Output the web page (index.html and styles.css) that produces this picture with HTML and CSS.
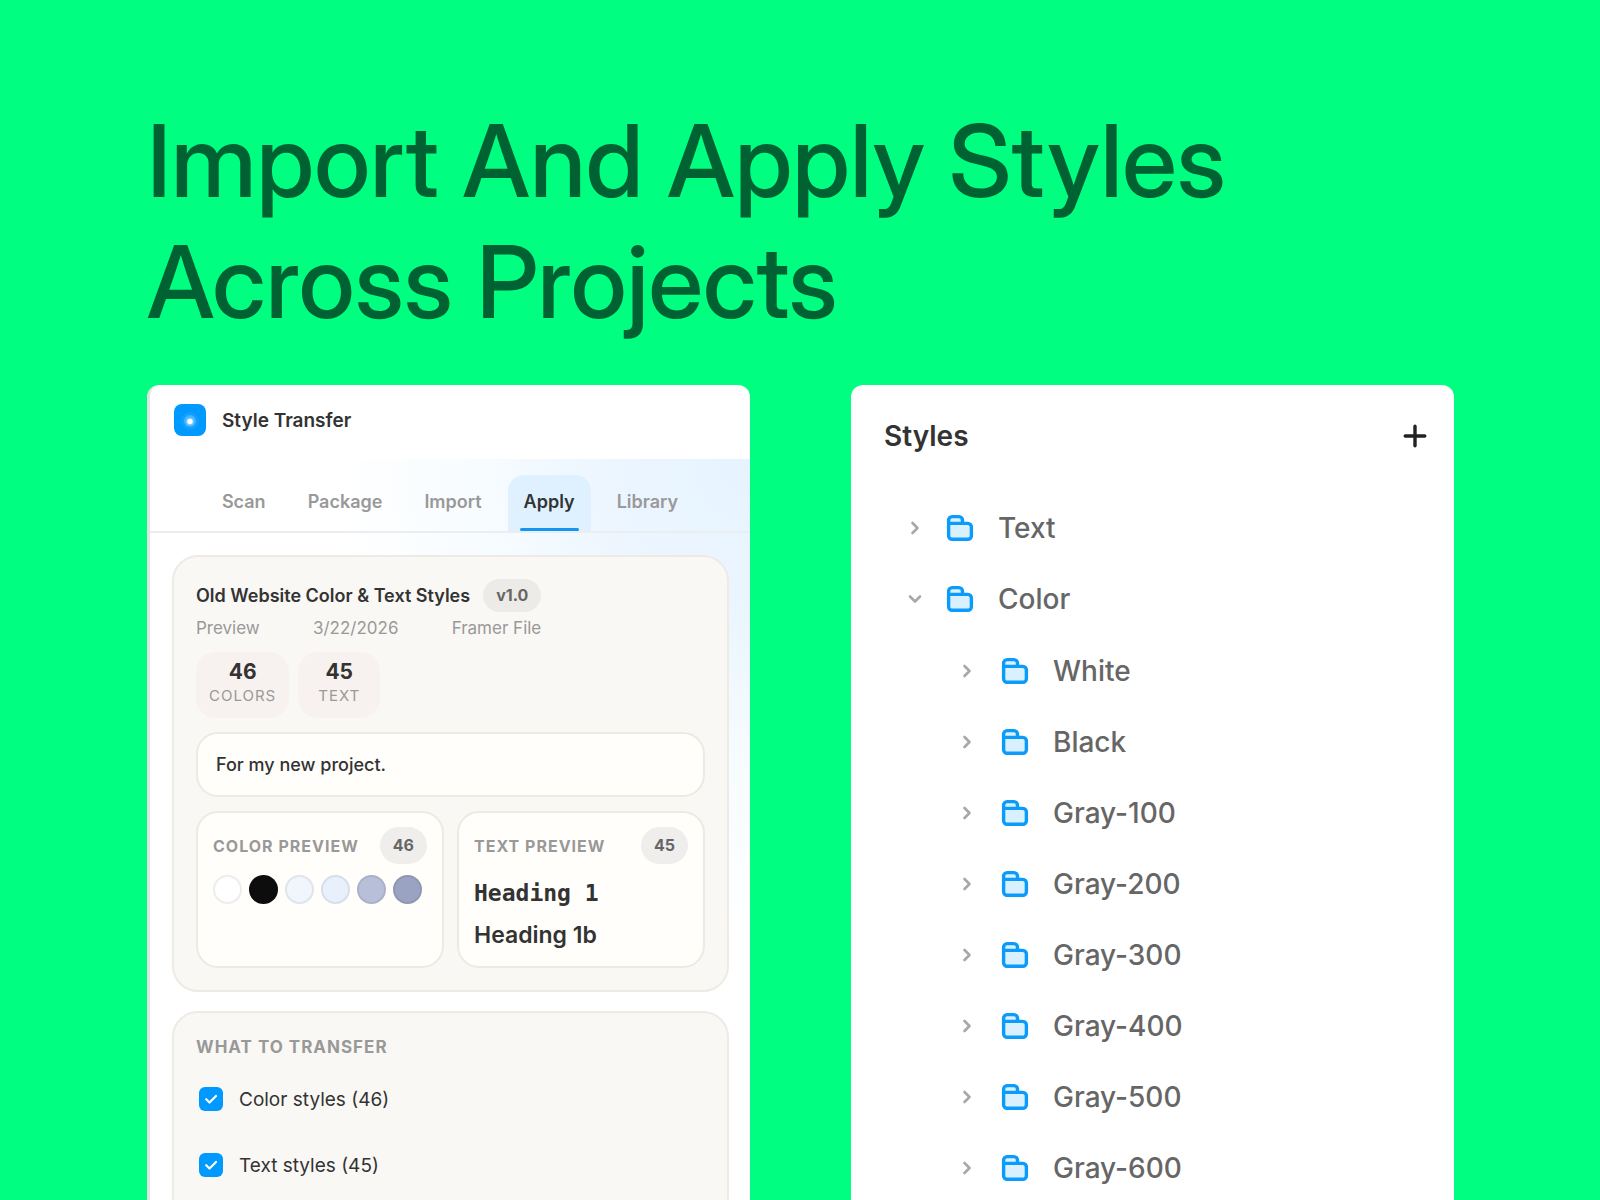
FILE: index.html
```html
<!DOCTYPE html>
<html lang="en">
<head>
<meta charset="utf-8">
<title>Style Transfer</title>
<link rel="stylesheet" href="styles.css">
</head>
<body>
<svg class="sprite" aria-hidden="true">
  <symbol id="folder" viewBox="0 0 28 28">
    <path d="M2.600 9.200V6.200A4 4 0 0 1 6.600 2.600H12.500A4 4 0 0 1 16.500 6.600V9.200H21.900A3.500 3.500 0 0 1 25.400 12.700V21.500A3.500 3.500 0 0 1 21.900 25.200H6.100A3.500 3.500 0 0 1 2.600 21.700Z" fill="#d9f0ff"/>
    <path d="M2.600 9.400V6.100A3.500 3.500 0 0 1 6.100 2.600H13A3.500 3.500 0 0 1 16.500 6.100V9M2.600 9.400H21.900A3.500 3.500 0 0 1 25.400 12.900V21.700A3.500 3.500 0 0 1 21.900 25.200H6.100A3.500 3.500 0 0 1 2.600 21.700Z" fill="none" stroke="#0a9bfb" stroke-width="3.400" stroke-linecap="round" stroke-linejoin="round"/>
  </symbol>
  <symbol id="chevron" viewBox="0 0 16 16">
    <path d="M5.500 3L10.500 8L5.500 13" fill="none" stroke="#a8a8a8" stroke-width="2.600" stroke-linecap="round" stroke-linejoin="round"/>
  </symbol>
</svg>
<main class="stage">
  <h1 class="headline">Import And Apply Styles<br>Across Projects</h1>
  <div class="panels">
    <section class="panel plugin">
      <header class="plugin-bar">
        <svg class="logo" viewBox="0 0 32 32" aria-hidden="true">
          <rect width="32" height="32" rx="8" fill="#0099ff"/>
          <circle cx="16" cy="17" r="9" fill="#fff" opacity=".06"/>
          <circle cx="16" cy="17" r="6" fill="#fff" opacity=".22"/>
          <circle cx="16" cy="17.500" r="4" fill="#fff" opacity=".25"/>
          <circle cx="16" cy="17.500" r="2.700" fill="#fff"/>
        </svg>
        <span class="plugin-name">Style Transfer</span>
      </header>
      <div class="plugin-body">
        <nav class="tabs">
          <button class="tab" type="button">Scan</button>
          <button class="tab" type="button">Package</button>
          <button class="tab" type="button">Import</button>
          <button class="tab active" type="button">Apply</button>
          <button class="tab" type="button">Library</button>
        </nav>
        <div class="cards">
          <article class="card">
            <div class="summary">
              <div class="summary-title"><h2>Old Website Color &amp; Text Styles</h2><span class="version">v1.0</span></div>
              <div class="meta"><span>Preview</span><span>3/22/2026</span><span>Framer File</span></div>
            </div>
            <div class="stats">
              <div class="stat"><strong>46</strong><span>COLORS</span></div>
              <div class="stat"><strong>45</strong><span>TEXT</span></div>
            </div>
            <input class="note" type="text" aria-label="Note" value="For my new project.">
            <div class="previews">
              <section class="preview">
                <div class="preview-head"><h3 class="label">COLOR PREVIEW</h3><span class="count">46</span></div>
                <div class="swatches">
                  <span class="swatch white"></span>
                  <span class="swatch black"></span>
                  <span class="swatch gray-100"></span>
                  <span class="swatch gray-200"></span>
                  <span class="swatch gray-300"></span>
                  <span class="swatch gray-400"></span>
                </div>
              </section>
              <section class="preview">
                <div class="preview-head"><h3 class="label">TEXT PREVIEW</h3><span class="count">45</span></div>
                <p class="sample mono">Heading 1</p>
                <p class="sample sans">Heading 1b</p>
              </section>
            </div>
          </article>
          <article class="card transfer">
            <h3 class="label">WHAT TO TRANSFER</h3>
            <label class="option"><input type="checkbox" checked><span>Color styles (46)</span></label>
            <label class="option"><input type="checkbox" checked><span>Text styles (45)</span></label>
          </article>
        </div>
      </div>
    </section>

    <section class="panel styles">
      <header class="styles-head">
        <h2>Styles</h2>
        <button class="add" type="button" aria-label="Add style">
          <svg viewBox="0 0 24 24"><path d="M12 2.200V21.800M2.200 12H21.800" fill="none" stroke="#222" stroke-width="3.400" stroke-linecap="round"/></svg>
        </button>
      </header>
      <ul class="tree">
        <li><div class="row"><svg class="chevron"><use href="#chevron"/></svg><svg class="folder"><use href="#folder"/></svg><span>Text</span></div></li>
        <li><div class="row"><svg class="chevron open"><use href="#chevron"/></svg><svg class="folder"><use href="#folder"/></svg><span>Color</span></div>
          <ul class="branch">
            <li class="row"><svg class="chevron"><use href="#chevron"/></svg><svg class="folder"><use href="#folder"/></svg><span>White</span></li>
            <li class="row"><svg class="chevron"><use href="#chevron"/></svg><svg class="folder"><use href="#folder"/></svg><span>Black</span></li>
            <li class="row"><svg class="chevron"><use href="#chevron"/></svg><svg class="folder"><use href="#folder"/></svg><span>Gray-100</span></li>
            <li class="row"><svg class="chevron"><use href="#chevron"/></svg><svg class="folder"><use href="#folder"/></svg><span>Gray-200</span></li>
            <li class="row"><svg class="chevron"><use href="#chevron"/></svg><svg class="folder"><use href="#folder"/></svg><span>Gray-300</span></li>
            <li class="row"><svg class="chevron"><use href="#chevron"/></svg><svg class="folder"><use href="#folder"/></svg><span>Gray-400</span></li>
            <li class="row"><svg class="chevron"><use href="#chevron"/></svg><svg class="folder"><use href="#folder"/></svg><span>Gray-500</span></li>
            <li class="row"><svg class="chevron"><use href="#chevron"/></svg><svg class="folder"><use href="#folder"/></svg><span>Gray-600</span></li>
          </ul>
        </li>
      </ul>
    </section>
  </div>
</main>
</body>
</html>
```

FILE: styles.css
```css
* { box-sizing: border-box; }
body {
  margin: 0;
  background: #00ff80;
  color: #333;
  font-family: Inter, "Liberation Sans", sans-serif;
}
h1, h2, h3, p, ul { margin: 0; padding: 0; }
ul { list-style: none; }
button, input { font: inherit; color: inherit; }
button { border: 0; padding: 0; background: none; }
.sprite { display: none; }

.stage {
  height: 100vh;
  padding: 100px 146px 0 147px;
  overflow: hidden;
  display: flex;
  flex-direction: column;
  gap: 43px;
}
.headline {
  color: #006232;
  font-family: "Inter Display", Inter, "Liberation Sans", sans-serif;
  font-size: 100px;
  font-variation-settings: "opsz" 32;
  line-height: 121px;
  font-weight: 500;
}
.panels {
  flex: 1;
  display: grid;
  grid-template-columns: 1fr 1fr;
  gap: 101px;
}
.panel {
  background: #fff;
  border-radius: 12px 12px 0 0;
  overflow: hidden;
}

/* Plugin window */
.plugin { border-left: 3px solid #e3e3e3; display: flex; flex-direction: column; }
.plugin-bar {
  display: flex;
  align-items: center;
  gap: 16px;
  height: 74px;
  padding: 0 24px 4px;
}
.logo { width: 32px; height: 32px; }
.plugin-name { font-size: 19px; font-weight: 600; }
.plugin-body {
  flex: 1;
  background: radial-gradient(ellipse 420px 480px at 100% 0, #e6f4ff, #ebf5ff 30%, #f7fcff 65%, #fff);
}
.tabs {
  display: flex;
  justify-content: center;
  gap: 10px;
  padding-top: 16px;
  border-bottom: 2px solid #ebeef0;
}
.tab {
  position: relative;
  height: 56px;
  padding: 0 16px 4px;
  border-radius: 16px 16px 0 0;
  font-size: 18px;
  font-weight: 600;
  color: #999;
}
.tab.active { background: #dff1ff; color: #333; }
.tab.active::after {
  content: "";
  position: absolute;
  left: 12px;
  right: 12px;
  bottom: 0;
  height: 3px;
  border-radius: 2px;
  background: #1495ee;
}
.cards { display: grid; gap: 19px; padding: 22px 21px 0 22px; }
.card {
  display: flex;
  flex-direction: column;
  padding: 22px;
  border: 2px solid #eeeae4;
  border-radius: 26px;
  background: #faf8f5;
}
.summary { width: fit-content; }
.summary-title { display: flex; align-items: center; gap: 13px; }
.summary-title h2 { font-size: 18px; font-weight: 600; line-height: 24px; }
.version, .count {
  border-radius: 20px;
  background: #ecebe7;
  color: #666;
  font-weight: 700;
  font-size: 16px;
}
.version { padding: 0 13px; line-height: 33px; }
.count { padding: 0 13px; line-height: 37px; background: #efeeec; }
.meta {
  display: flex;
  justify-content: space-between;
  font-size: 17px;
  line-height: 32px;
  color: #999;
}
.stats { display: flex; gap: 9px; margin: 8px 0 14px; }
.stat {
  display: flex;
  flex-direction: column;
  align-items: center;
  min-width: 82px;
  height: 66px;
  padding: 7px 13px;
  border-radius: 20px;
  background: #f7f2ef;
}
.stat strong { font-size: 21px; line-height: 26px; }
.stat span { font-size: 15px; line-height: 22px; letter-spacing: 1px; color: #999; }
.note {
  height: 65px;
  padding: 0 18px;
  border: 2px solid #eee9e3;
  border-radius: 22px;
  background: #fffefb;
  font-size: 18px;
  font-weight: 500;
}
.previews { display: grid; grid-template-columns: 1fr 1fr; gap: 13px; margin-top: 14px; }
.preview {
  height: 157px;
  padding: 14px 15px;
  border: 2px solid #eee9e3;
  border-radius: 22px;
  background: #fffefb;
}
.preview-head { display: flex; align-items: center; justify-content: space-between; }
.label { font-size: 16px; font-weight: 700; line-height: 24px; letter-spacing: 1px; color: #999; }
.swatches { display: flex; gap: 7px; margin-top: 11px; }
.swatch { width: 29px; height: 29px; border-radius: 50%; border: 2px solid #00000012; }
.white { background: #fff; }
.black { background: #0d0d0d; }
.gray-100 { background: #f1f6fd; }
.gray-200 { background: #e8f0fc; }
.gray-300 { background: #b8bfd8; }
.gray-400 { background: #9ba3c2; }
.sample { line-height: 42px; }
.mono { margin-top: 8px; font: 700 23px/42px "DejaVu Sans Mono", "Liberation Mono", monospace; }
.sans { font-size: 23px; font-weight: 600; }
.option { display: flex; align-items: center; gap: 16px; height: 66px; padding-left: 3px; font-size: 19px; }
.option input {
  appearance: none;
  width: 24px;
  height: 24px;
  margin: 0;
  border-radius: 6px;
  background: #0099ff url("data:image/svg+xml,%3Csvg xmlns='http://www.w3.org/2000/svg' viewBox='0 0 24 24'%3E%3Cpath d='M7.200 12.200L10.500 15.500L17 9' fill='none' stroke='white' stroke-width='2.200' stroke-linecap='round' stroke-linejoin='round'/%3E%3C/svg%3E") center / contain;
}
.transfer .label { margin-bottom: 7px; font-size: 17px; }

/* Styles list */
.styles { padding: 16px 27px 0 33px; font-size: 28px; }
.styles-head { display: flex; align-items: center; justify-content: space-between; height: 70px; }
.styles-head h2 { font-size: 28px; font-weight: 600; }
.add { width: 24px; height: 24px; }
.add svg { display: block; }
.tree { padding: 21px 0 0 23px; color: #666; font-weight: 500; }
.branch { padding: 1px 0 0 52px; }
.row { display: flex; align-items: center; height: 71px; }
.chevron { width: 16px; height: 16px; margin-right: 23px; }
.chevron.open { transform: rotate(90deg); }
.folder { width: 28px; height: 28px; margin-right: 24px; }
.branch .chevron { margin-right: 26px; }
```
